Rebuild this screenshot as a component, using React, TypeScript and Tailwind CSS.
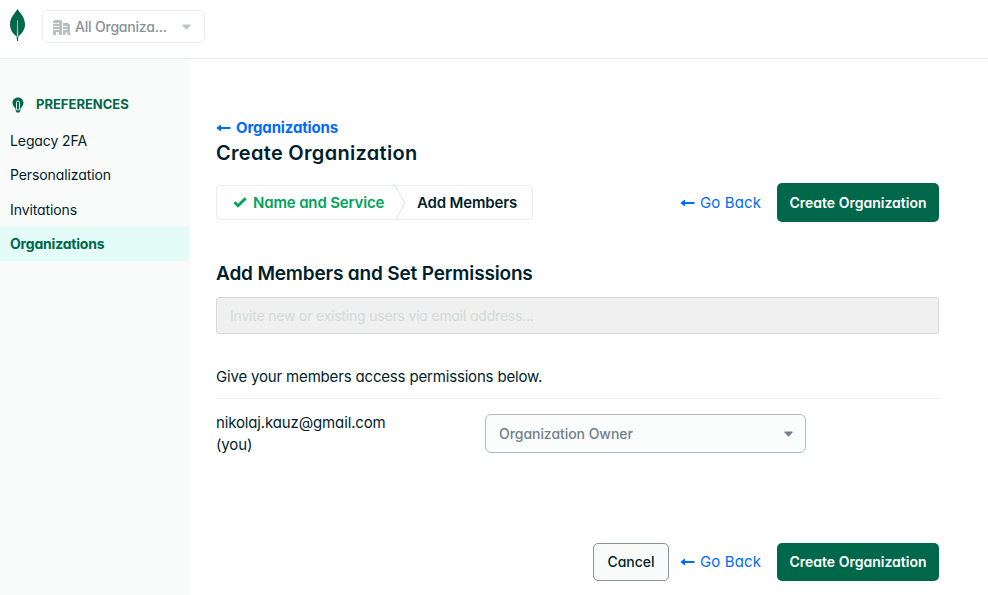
import React from "react";

const Leaf = () => (
  <svg width="17" height="34" viewBox="0 0 17 34" className="shrink-0">
    <path d="M8.500 1C9.800 4 16 8 16 16.500C16 22.500 12 26 9.400 28.500L8.900 33H8L7.600 28.500C4 25.500 1 22 1 16C1 9 6.800 4.500 8.500 1Z" fill="#00684a" />
    <path d="M8.500 12L8.200 28.500H9Z" fill="#d5e8e1" stroke="#b9d6cc" strokeWidth=".5" />
  </svg>
);

const Building = () => (
  <svg width="17" height="16" viewBox="0 0 17 16" className="shrink-0">
    <path d="M0 2.500L1.500 1H7.500L9 2V16H6V13H3V16H0ZM10 4H15L17 5.500V16H14.500V13.500H12.500V16H10Z" fill="#b8c0be" />
    <path d="M0 4.500H6.500M0 7.500H6.500M0 10.500H6.500M10 7.500H14.500M10 10.500H14.500" stroke="#fff" strokeWidth=".8" />
  </svg>
);

const Bulb = () => (
  <svg width="12" height="16" viewBox="0 0 12 16" className="shrink-0">
    <path d="M6 .5C2.900 .5 .5 2.800 .5 5.700C.5 8 1.700 9.600 3.300 11.200V12.500H8.700V11.200C10.300 9.600 11.500 8 11.500 5.700C11.500 2.800 9.100 .5 6 .5ZM3.300 13.300H8.700L7.500 15.500H4.500Z" fill="#00684a" />
    <path d="M4.500 12.500V5.500Q4.500 4 6 4T7.500 5.500V12.500" stroke="#e3efeb" strokeWidth="1" fill="none" />
  </svg>
);

const Arrow = () => (
  <svg width="15" height="8" viewBox="0 0 15 8" className="shrink-0">
    <path d="M.3 4L4.500 .7Q5 .5 5 1V3H14Q14.700 3 14.700 4T14 5H5V7Q5 7.500 4.500 7.300Z" fill="#016bf8" />
  </svg>
);

const Check = () => (
  <svg width="14" height="11" viewBox="0 0 14 11" className="shrink-0">
    <path d="M1.500 5.200L5 8.700L12.700 1.300" stroke="#00a35c" strokeWidth="2.900" fill="none" />
  </svg>
);

const Caret = ({ color }: { color: string }) => (
  <svg width="9" height="6" viewBox="0 0 9 6" className="shrink-0">
    <path d="M.8 .5H8.200Q9 .8 8.500 1.500L5 5.300Q4.500 5.700 4 5.300L.5 1.500Q0 .8 .8 .5Z" fill={color} />
  </svg>
);

const GoBack = () => (
  <a className="flex h-[38px] items-center gap-[5px] text-[15px] tracking-[0.12px] text-[#016bf8]">
    <Arrow />
    <span className="w-[77px] pt-px">Go Back</span>
  </a>
);

const CreateButton = ({ className }: { className: string }) => (
  <button className={`w-[162px] shrink-0 rounded-[5px] bg-[#00684a] text-[14px] font-semibold text-white ${className}`}>
    Create Organization
  </button>
);

export default function App() {
  return (
    <div className="flex h-[595px] w-[988px] flex-col overflow-hidden whitespace-nowrap bg-white font-['Inter','Liberation_Sans',sans-serif] text-[#001e2b] [font-feature-settings:'cv11']">
      <header className="flex h-[59px] shrink-0 items-start border-b border-[#e8edeb] pl-[9px] pt-2">
        <Leaf />
        <div className="ml-4 mt-[2px] flex h-[33px] w-[163px] items-center rounded-[5px] border border-[#e8edeb] pl-[10px] text-[14px] font-medium tracking-[-0.2px] text-[#889397]">
          <Building />
          <span className="ml-[5px] w-[107px]">All Organiza...</span>
          <Caret color="#b8c4c2" />
        </div>
      </header>
      <div className="flex min-h-0 flex-1">
        <aside className="w-[190px] shrink-0 bg-[#f9fbfa] pt-[28px] text-[14px]">
          <h2 className="flex h-[36px] items-center gap-[12px] pl-[12px] text-[13px] font-bold text-[#00684a]">
            <Bulb />
            PREFERENCES
          </h2>
          <nav className="tracking-[-0.1px]">
            <a className="flex h-[34px] items-center pl-[10px] pt-px">Legacy 2FA</a>
            <a className="flex h-[34px] items-center pl-[10px] pt-px">Personalization</a>
            <a className="flex h-[35px] items-center pl-[10px] pt-px">Invitations</a>
            <a className="flex h-[35px] items-center bg-[#e3fcf7] pb-px pl-[10px] font-bold tracking-[-0.2px] text-[#00684a]">Organizations</a>
          </nav>
        </aside>
        <main className="ml-[26px] w-[723px] pt-[59px]">
          <a className="flex h-5 items-center gap-[5px] text-[15px] font-bold tracking-[-0.15px] text-[#016bf8]">
            <Arrow />
            Organizations
          </a>
          <h1 className="flex h-[30px] items-center text-[20px] font-semibold tracking-[0.3px]">Create Organization</h1>
          <div className="mt-[15px] flex h-[39px] items-center">
            <div className="flex h-[35px] w-[317px] items-center rounded-[4px] border border-[#e8edeb] text-[15px] font-semibold tracking-[-0.15px]">
              <div className="flex w-[178px] items-center gap-[6px] pl-4 text-[#00a35c]">
                <Check />
                <span className="pt-px">Name and Service</span>
              </div>
              <svg width="11" height="33" viewBox="0 0 11 33" className="shrink-0">
                <path d="M.5 0L9.500 17L1.500 33" stroke="#dce2e0" fill="none" />
              </svg>
              <span className="ml-[11px] pt-px">Add Members</span>
            </div>
            <div className="ml-auto flex items-center">
              <GoBack />
              <CreateButton className="h-[39px]" />
            </div>
          </div>
          <h2 className="mt-[37px] flex h-[30px] items-center text-[19px] font-semibold tracking-[-0.16px]">Add Members and Set Permissions</h2>
          <div className="mt-[8px] flex h-[37px] items-center rounded-[3px] border border-[#d5d9d9] bg-[#f0f0f0] pl-[13px] text-[14px] tracking-[-0.2px] text-[#d5dad9]">
            Invite new or existing users via email address...
          </div>
          <p className="mt-[31px] flex h-[24px] items-center text-[15px] tracking-[-0.17px]">Give your members access permissions below.</p>
          <div className="mt-[9px] flex h-[145px] border-t border-[#e8edeb] pt-[13px]">
            <p className="w-[269px] text-[15px] leading-[21.500px] tracking-[-0.14px]">
              nikolaj.kauz@gmail.com
              <br />
              (you)
            </p>
            <div className="mt-[2px] flex h-[39px] w-[321px] items-center justify-between rounded-[6px] border border-[#b1bbbd] bg-[#fbfcfc] pl-[13px] pr-3 text-[14px] font-medium tracking-[-0.05px] text-[#71808a]">
              Organization Owner
              <Caret color="#71808a" />
            </div>
          </div>
          <div className="flex items-center justify-end">
            <button className="mr-[11px] h-[38px] w-[76px] rounded-[5px] border border-[#889397] bg-[#f9fbfa] pb-[2px] text-[14px] font-medium">Cancel</button>
            <GoBack />
            <CreateButton className="h-[38px] pb-px" />
          </div>
        </main>
      </div>
    </div>
  );
}
